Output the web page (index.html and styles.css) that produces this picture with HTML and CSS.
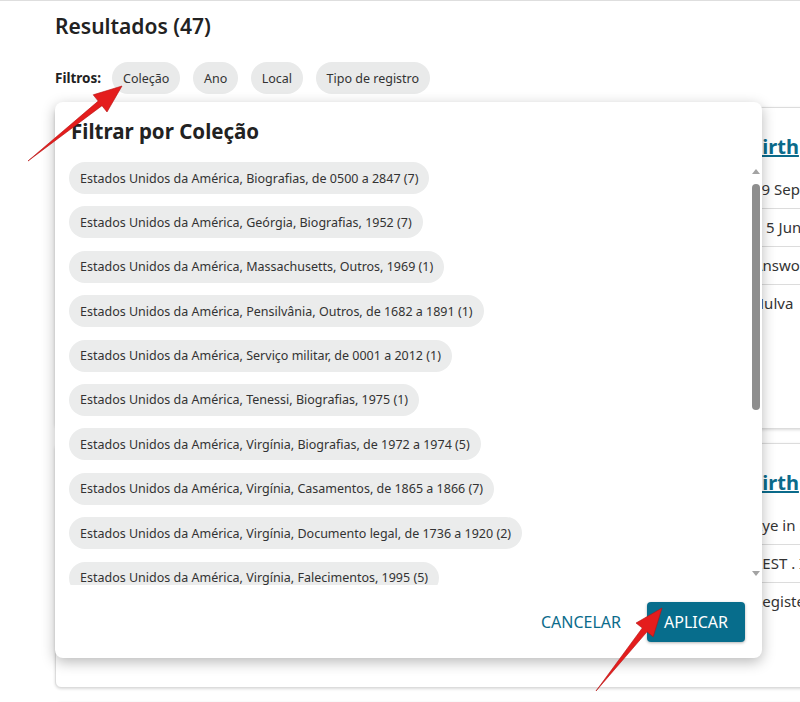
FILE: index.html
```html
<!DOCTYPE html>
<html lang="pt-BR">
<head>
  <meta charset="utf-8">
  <meta name="viewport" content="width=device-width, initial-scale=1.0">
  <link rel="stylesheet" href="styles.css">
</head>
<body>
  <main class="page">
    <h1 class="page-title">Resultados (47)</h1>

    <div class="filters">
      <span class="filters-label">Filtros:</span>
      <button class="filter-chip">Coleção</button>
      <button class="filter-chip">Ano</button>
      <button class="filter-chip">Local</button>
      <button class="filter-chip">Tipo de registro</button>
    </div>

    <section class="results">
      <article class="record record-tall">
        <div class="record-person">
          <p class="person-name">William Henry Taylor</p>
        </div>
        <div class="record-facts">
          <a class="record-title" href="#">Birth</a>
          <div class="fact">29 Sep 1851</div>
          <div class="fact fact-shift">c. 5 Jun 1852</div>
          <div class="fact">Answorth</div>
          <div class="fact fact-last">Hulva</div>
        </div>
      </article>

      <article class="record">
        <div class="record-person">
          <p class="person-name">Mary Ann Taylor</p>
        </div>
        <div class="record-facts">
          <a class="record-title" href="#">Birth</a>
          <div class="fact">Rye in Sussex</div>
          <div class="fact">REST . Inglaterra</div>
          <div class="fact fact-last">Registers</div>
        </div>
      </article>

      <article class="record">
        <div class="record-person">
          <p class="person-name">John Taylor</p>
        </div>
      </article>

      <!-- Filter dialog, open over the results -->
      <div class="filter-dialog">
        <h2 class="dialog-title">Filtrar por Coleção</h2>
        <div class="dialog-body">
          <div class="option-list">
            <button class="option">Estados Unidos da América, Biografias, de 0500 a 2847 (7)</button>
            <button class="option">Estados Unidos da América, Geórgia, Biografias, 1952 (7)</button>
            <button class="option">Estados Unidos da América, Massachusetts, Outros, 1969 (1)</button>
            <button class="option">Estados Unidos da América, Pensilvânia, Outros, de 1682 a 1891 (1)</button>
            <button class="option">Estados Unidos da América, Serviço militar, de 0001 a 2012 (1)</button>
            <button class="option">Estados Unidos da América, Tenessi, Biografias, 1975 (1)</button>
            <button class="option">Estados Unidos da América, Virgínia, Biografias, de 1972 a 1974 (5)</button>
            <button class="option">Estados Unidos da América, Virgínia, Casamentos, de 1865 a 1866 (7)</button>
            <button class="option">Estados Unidos da América, Virgínia, Documento legal, de 1736 a 1920 (2)</button>
            <button class="option">Estados Unidos da América, Virgínia, Falecimentos, 1995 (5)</button>
            <button class="option">Estados Unidos da América, Virgínia, Registros de igreja, 1901 (1)</button>
          </div>
          <div class="scrollbar">
            <span class="scroll-arrow scroll-up"></span>
            <span class="scroll-thumb"></span>
            <span class="scroll-arrow scroll-down"></span>
          </div>
        </div>
        <div class="dialog-actions">
          <button class="btn-text">Cancelar</button>
          <button class="btn-primary">Aplicar</button>
        </div>
      </div>
    </section>
  </main>

  <!-- Red annotation arrows -->
  <svg class="annotations" width="800" height="702" viewBox="0 0 800 702">
    <polygon class="arrow" points="28,160 102,104.7 107,111 122,85 93.2,93.8 98.2,100.1"/>
    <polygon class="arrow" points="596,690 647,630.8 653.2,635.8 662,607 636,622 642.3,627"/>
  </svg>
</body>
</html>
```

FILE: styles.css
```css
* {
  margin: 0;
  padding: 0;
  box-sizing: border-box;
}

body {
  width: 800px;
  height: 702px;
  overflow: hidden;
  position: relative;
  background: #fff;
  border-top: 1px solid #dedede;
  font-family: "Noto Sans", "Open Sans", sans-serif;
  color: #222;
}

button {
  font-family: inherit;
  border: 0;
  cursor: pointer;
}

.page {
  padding-left: 55px;
}

.page-title {
  font-size: 21px;
  font-weight: 600;
  line-height: 30px;
  padding-top: 10px;
  color: #222;
}

/* Filter chips */
.filters {
  display: flex;
  align-items: center;
  gap: 12.5px;
  margin-top: 21px;
}

.filters-label {
  font-size: 13.5px;
  font-weight: 700;
  margin-right: -1.5px;
}

.filter-chip {
  height: 32px;
  padding: 0 11px;
  border-radius: 16px;
  background: #e9eaea;
  color: #333;
  font-size: 12.5px;
}

/* Result cards behind the dialog */
.results {
  position: relative;
  margin-top: 13px;
}

.record {
  width: 960px;
  display: grid;
  grid-template-columns: 677px 1fr;
  align-items: start;
  padding: 25px 16px 67px;
  margin-bottom: 14px;
  background: #fff;
  border: 1px solid #dcdcdc;
  border-radius: 6px;
  box-shadow: 0 1px 3px rgba(0, 0, 0, 0.15);
}

.record-tall {
  padding-bottom: 106px;
}

.person-name {
  font-size: 18px;
  font-weight: 700;
}

.record-facts {
  display: flex;
  flex-direction: column;
}

.record-title {
  font-size: 20px;
  font-weight: 700;
  line-height: 28px;
  color: #0b6b8b;
  margin-bottom: 10px;
}

.fact {
  font-size: 15px;
  line-height: 21px;
  padding: 8px 0 8px 4px;
  border-bottom: 1px solid #dcdcdc;
  color: #333;
}

.fact-shift {
  padding-left: 2px;
}

.fact-last {
  border-bottom: 0;
}

/* Filter dialog */
.filter-dialog {
  position: absolute;
  top: -5px;
  left: 0;
  width: 707px;
  height: 556px;
  display: flex;
  flex-direction: column;
  background: #fff;
  border-radius: 8px;
  box-shadow: 0 4px 14px rgba(0, 0, 0, 0.28);
  z-index: 2;
}

.dialog-title {
  font-size: 20.5px;
  font-weight: 700;
  line-height: 28px;
  padding: 15px 16px 0;
  color: #222;
}

.dialog-body {
  display: flex;
  height: 423px;
  margin-top: 17px;
  padding-left: 14px;
}

.option-list {
  flex: 1;
  overflow: hidden;
  display: flex;
  flex-direction: column;
  align-items: flex-start;
  gap: 12.4px;
}

.option {
  flex-shrink: 0;
  height: 32px;
  padding: 0 11px;
  border-radius: 16px;
  background: #ebecec;
  color: #333;
  font-size: 12.5px;
}

.scrollbar {
  width: 13px;
  display: flex;
  flex-direction: column;
  align-items: center;
  padding: 7px 0 9px;
}

.scroll-arrow {
  width: 0;
  height: 0;
  border-left: 4px solid transparent;
  border-right: 4px solid transparent;
}

.scroll-up {
  border-bottom: 5px solid #a3a3a3;
}

.scroll-down {
  border-top: 5px solid #a3a3a3;
  margin-top: auto;
}

.scroll-thumb {
  width: 8px;
  height: 226px;
  margin-top: 10px;
  border-radius: 4px;
  background: #8e8e8e;
}

.dialog-actions {
  display: flex;
  justify-content: flex-end;
  align-items: center;
  gap: 14px;
  padding: 17px 17px 16px;
}

.btn-text {
  height: 40px;
  padding: 0 12px;
  background: none;
  color: #0b6b8b;
  font-size: 16px;
  text-transform: uppercase;
}

.btn-primary {
  height: 40px;
  padding: 0 17px;
  border-radius: 4px;
  background: #076d8c;
  color: #fff;
  font-size: 16px;
  text-transform: uppercase;
  box-shadow: 0 1px 3px rgba(0, 0, 0, 0.3);
}

/* Annotation arrows */
.annotations {
  position: absolute;
  top: 0;
  left: 0;
  pointer-events: none;
  z-index: 5;
}

.arrow {
  fill: #e41d1d;
  stroke: #b51212;
  stroke-width: 0.6;
  stroke-linejoin: round;
}
```
